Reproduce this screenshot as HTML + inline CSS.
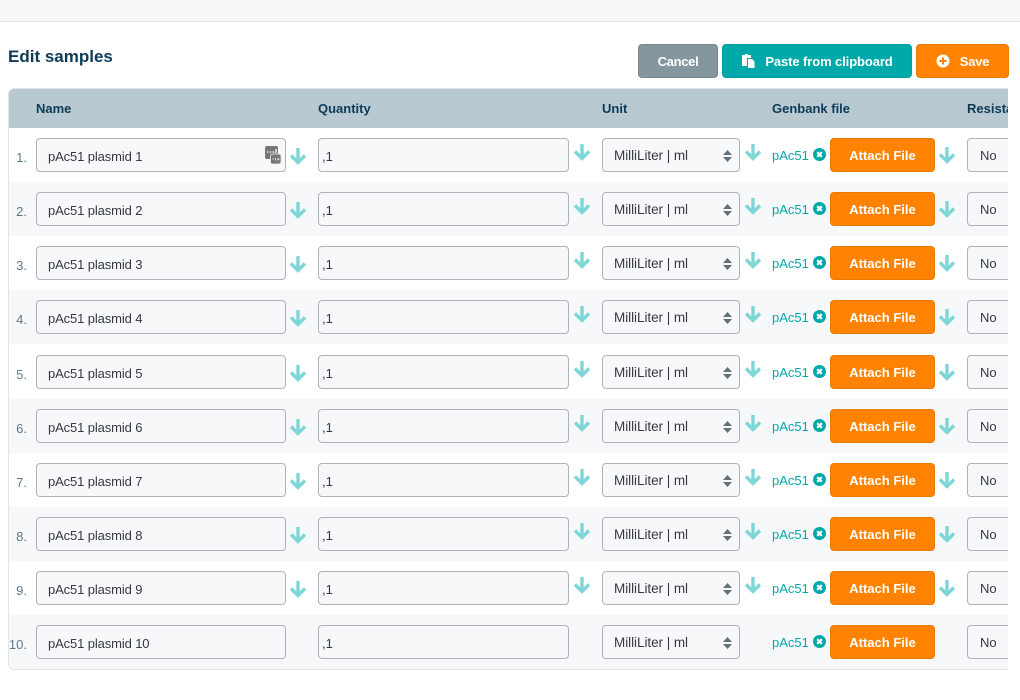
<!DOCTYPE html>
<html><head><meta charset="utf-8"><style>
html,body{margin:0;padding:0;background:#fff}
body{width:1020px;height:700px;position:relative;overflow:hidden;font-family:"Liberation Sans",sans-serif;color:#343a40}
.top{position:absolute;left:0;top:0;width:1020px;height:21px;background:#f7f8fa;border-bottom:1px solid #e3e6e9}
h1{position:absolute;left:8px;top:47px;margin:0;font-size:17px;line-height:20px;font-weight:700;color:#0d3b56}
.b{position:absolute;box-sizing:border-box;border-radius:4px;color:#fff;font-weight:700;font-size:13px;text-align:center;height:34px;line-height:33px}
.clip{position:absolute;left:8px;top:88px;width:1000px;height:582px;overflow:hidden;box-sizing:border-box;border:1px solid #e1e5e8;border-right:0;border-radius:6px 0 0 6px}
.hd{position:absolute;left:-1px;top:0;width:1001px;height:39px;background:#b9c9d2}
.hd span{position:absolute;top:12px;font-size:13px;line-height:16px;font-weight:700;color:#0d3b56}
.r{position:absolute;left:-9px;width:1009px;height:54px}
.g{background:#f7f8fa}
.n{position:absolute;right:982px;top:22px;font-size:13px;line-height:16px;color:#5f7a8a}
.i{position:absolute;box-sizing:border-box;top:10px;height:34px;background:#f7f8fa;border:1px solid #b0b3b6;border-radius:4px;font-size:13px;line-height:36px;color:#343a40;white-space:nowrap}
.nm{left:36px;width:250px;padding-left:11px;letter-spacing:-.12px}
.q{left:318px;width:251px;padding-left:3px}
.u{left:602px;width:138px;padding-left:11px;line-height:34px;font-size:13.5px;letter-spacing:-.05px}
.no{left:967px;width:60px;padding-left:12px;line-height:34px}
.sp{position:absolute;left:723px;top:22px}
.a{position:absolute;width:18px;height:18px}
.a1{left:289px;top:20px}.a2{left:573px;top:16px}.a3{left:744px;top:16px}.a4{left:938px;top:19px}
.f{position:absolute;left:772px;top:20px;font-size:13px;line-height:16px;color:#00a9a9}
.x{position:absolute;left:813px;top:20px}
.at{left:830px;top:10px;width:105px;background:#ff8300;border:1px solid #e87a05}
</style></head><body>
<svg width="0" height="0" style="position:absolute"><defs>
<g id="ar"><path d="M9 0V14M2 7.500L9 14.500L16 7.500" fill="none" stroke="#7fd6d6" stroke-width="3.400"/></g>
<g id="sl"><path d="M4.500 0L9 5H0Z M4.500 12L0 7H9Z" fill="#64717a"/></g>
<g id="cl"><circle cx="6.500" cy="6.500" r="6.500" fill="#00a9a9"/><path d="M4.200 4.200L8.800 8.800M8.800 4.200L4.200 8.800" stroke="#fff" stroke-width="2.200"/></g>
</defs></svg>
<div class="top"></div>
<h1>Edit samples</h1>
<div class="b" style="left:638px;top:44px;width:80px;background:#84979f;border:1px solid #76898f;letter-spacing:-.3px">Cancel</div>
<div class="b" style="left:722px;top:44px;width:190px;background:#00a9a9;border:1px solid #00a0a0;padding-left:24px;letter-spacing:-.1px">Paste from clipboard
<svg style="position:absolute;left:19px;top:9px" width="13" height="14" viewBox="0 0 13 14"><path d="M0 1H3V0H6V1H9V4H5V12H0Z" fill="#fff"/><path d="M6 5H10L12.500 7.500V14H6Z" fill="#fff"/></svg></div>
<div class="b" style="left:916px;top:44px;width:93px;background:#ff8300;border:1px solid #e87a05;padding-left:24px;letter-spacing:-.2px">Save
<svg style="position:absolute;left:19px;top:9px" width="14" height="14" viewBox="0 0 14 14"><circle cx="7" cy="7" r="6.500" fill="#fff"/><path d="M7 3.500V10.500M3.500 7H10.500" stroke="#ff8300" stroke-width="2"/></svg></div>

<div class="clip">
<div class="hd"><span style="left:28px">Name</span><span style="left:310px">Quantity</span><span style="left:594px">Unit</span><span style="left:764px">Genbank file</span><span style="left:959px">Resistance</span></div>

<div class="r" style="top:39px"><div class="n">1.</div><div class="i nm">pAc51 plasmid 1</div>
<svg style="position:absolute;left:265px;top:18px" width="16" height="18" viewBox="0 0 16 18"><rect x="0" y="0" width="13" height="13" rx="2" fill="#777"/><rect x="5.500" y="8" width="10.500" height="10" rx="2" fill="#777" stroke="#f7f8fa" stroke-width=".7"/><path d="M2 6h1.500M4.800 6h1.500M7.600 6h1.500M11 3v4" stroke="#fff" stroke-width="1.300"/><path d="M7.500 13h1.500M10.500 12v2.500M12 13.200h2.500M13.200 12v2.500" stroke="#ddd" stroke-width=".9"/></svg>
<svg class="a a1"><use href="#ar"/></svg><div class="i q">,1</div><svg class="a a2"><use href="#ar"/></svg><div class="i u">MilliLiter | ml</div><svg class="sp" width="9" height="12"><use href="#sl"/></svg><svg class="a a3"><use href="#ar"/></svg><div class="f">pAc51</div><svg class="x" width="13" height="13"><use href="#cl"/></svg><div class="b at">Attach File</div><svg class="a a4"><use href="#ar"/></svg><div class="i no">No</div></div>

<div class="r g" style="top:93px"><div class="n">2.</div><div class="i nm">pAc51 plasmid 2</div><svg class="a a1"><use href="#ar"/></svg><div class="i q">,1</div><svg class="a a2"><use href="#ar"/></svg><div class="i u">MilliLiter | ml</div><svg class="sp" width="9" height="12"><use href="#sl"/></svg><svg class="a a3"><use href="#ar"/></svg><div class="f">pAc51</div><svg class="x" width="13" height="13"><use href="#cl"/></svg><div class="b at">Attach File</div><svg class="a a4"><use href="#ar"/></svg><div class="i no">No</div></div>

<div class="r" style="top:147px"><div class="n">3.</div><div class="i nm">pAc51 plasmid 3</div><svg class="a a1"><use href="#ar"/></svg><div class="i q">,1</div><svg class="a a2"><use href="#ar"/></svg><div class="i u">MilliLiter | ml</div><svg class="sp" width="9" height="12"><use href="#sl"/></svg><svg class="a a3"><use href="#ar"/></svg><div class="f">pAc51</div><svg class="x" width="13" height="13"><use href="#cl"/></svg><div class="b at">Attach File</div><svg class="a a4"><use href="#ar"/></svg><div class="i no">No</div></div>

<div class="r g" style="top:201px"><div class="n">4.</div><div class="i nm">pAc51 plasmid 4</div><svg class="a a1"><use href="#ar"/></svg><div class="i q">,1</div><svg class="a a2"><use href="#ar"/></svg><div class="i u">MilliLiter | ml</div><svg class="sp" width="9" height="12"><use href="#sl"/></svg><svg class="a a3"><use href="#ar"/></svg><div class="f">pAc51</div><svg class="x" width="13" height="13"><use href="#cl"/></svg><div class="b at">Attach File</div><svg class="a a4"><use href="#ar"/></svg><div class="i no">No</div></div>

<div class="r" style="top:256px"><div class="n">5.</div><div class="i nm">pAc51 plasmid 5</div><svg class="a a1"><use href="#ar"/></svg><div class="i q">,1</div><svg class="a a2"><use href="#ar"/></svg><div class="i u">MilliLiter | ml</div><svg class="sp" width="9" height="12"><use href="#sl"/></svg><svg class="a a3"><use href="#ar"/></svg><div class="f">pAc51</div><svg class="x" width="13" height="13"><use href="#cl"/></svg><div class="b at">Attach File</div><svg class="a a4"><use href="#ar"/></svg><div class="i no">No</div></div>

<div class="r g" style="top:310px"><div class="n">6.</div><div class="i nm">pAc51 plasmid 6</div><svg class="a a1"><use href="#ar"/></svg><div class="i q">,1</div><svg class="a a2"><use href="#ar"/></svg><div class="i u">MilliLiter | ml</div><svg class="sp" width="9" height="12"><use href="#sl"/></svg><svg class="a a3"><use href="#ar"/></svg><div class="f">pAc51</div><svg class="x" width="13" height="13"><use href="#cl"/></svg><div class="b at">Attach File</div><svg class="a a4"><use href="#ar"/></svg><div class="i no">No</div></div>

<div class="r" style="top:364px"><div class="n">7.</div><div class="i nm">pAc51 plasmid 7</div><svg class="a a1"><use href="#ar"/></svg><div class="i q">,1</div><svg class="a a2"><use href="#ar"/></svg><div class="i u">MilliLiter | ml</div><svg class="sp" width="9" height="12"><use href="#sl"/></svg><svg class="a a3"><use href="#ar"/></svg><div class="f">pAc51</div><svg class="x" width="13" height="13"><use href="#cl"/></svg><div class="b at">Attach File</div><svg class="a a4"><use href="#ar"/></svg><div class="i no">No</div></div>

<div class="r g" style="top:418px"><div class="n">8.</div><div class="i nm">pAc51 plasmid 8</div><svg class="a a1"><use href="#ar"/></svg><div class="i q">,1</div><svg class="a a2"><use href="#ar"/></svg><div class="i u">MilliLiter | ml</div><svg class="sp" width="9" height="12"><use href="#sl"/></svg><svg class="a a3"><use href="#ar"/></svg><div class="f">pAc51</div><svg class="x" width="13" height="13"><use href="#cl"/></svg><div class="b at">Attach File</div><svg class="a a4"><use href="#ar"/></svg><div class="i no">No</div></div>

<div class="r" style="top:472px"><div class="n">9.</div><div class="i nm">pAc51 plasmid 9</div><svg class="a a1"><use href="#ar"/></svg><div class="i q">,1</div><svg class="a a2"><use href="#ar"/></svg><div class="i u">MilliLiter | ml</div><svg class="sp" width="9" height="12"><use href="#sl"/></svg><svg class="a a3"><use href="#ar"/></svg><div class="f">pAc51</div><svg class="x" width="13" height="13"><use href="#cl"/></svg><div class="b at">Attach File</div><svg class="a a4"><use href="#ar"/></svg><div class="i no">No</div></div>

<div class="r g" style="top:526px"><div class="n">10.</div><div class="i nm">pAc51 plasmid 10</div><div class="i q">,1</div><div class="i u">MilliLiter | ml</div><svg class="sp" width="9" height="12"><use href="#sl"/></svg><div class="f">pAc51</div><svg class="x" width="13" height="13"><use href="#cl"/></svg><div class="b at">Attach File</div><div class="i no">No</div></div>
</div>
</body></html>
